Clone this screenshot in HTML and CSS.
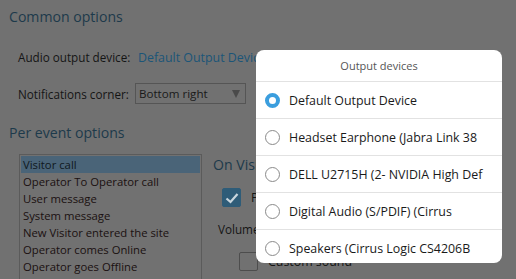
FILE: index.html
```html
<!DOCTYPE html>
<html>
<head>
<meta charset="utf-8">
<link rel="stylesheet" href="styles.css">
</head>
<body>
<div class="page">
  <div class="section-title">Common options</div>
  <div class="row row-audio">
    <span class="label">Audio output device:</span>
    <span class="link">Default Output Device</span>
  </div>
  <div class="row row-corner">
    <span class="label">Notifications corner:</span>
    <div class="select"><span>Bottom right</span><span class="arrow"></span></div>
  </div>
  <div class="section-title title-per">Per event options</div>
  <div class="events">
    <div class="listbox">
      <div class="item selected">Visitor call</div>
      <div class="item">Operator To Operator call</div>
      <div class="item">User message</div>
      <div class="item">System message</div>
      <div class="item">New Visitor entered the site</div>
      <div class="item">Operator comes Online</div>
      <div class="item">Operator goes Offline</div>
    </div>
    <div class="panel">
      <div class="panel-title">On Visitor call</div>
      <div class="check-row">
        <span class="checkbox checked"><svg width="14" height="12" viewBox="0 0 14 12"><path d="M1.5 6.5 L5.5 10 L12.5 2" fill="none" stroke="#c9d6de" stroke-width="2.2"/></svg></span>
        <span class="check-label">Play sound</span>
      </div>
      <div class="volume">Volume</div>
      <div class="check-row custom">
        <span class="checkbox"></span>
        <span class="check-label">Custom sound</span>
      </div>
    </div>
  </div>
</div>

<div class="popup">
  <div class="popup-header">Output devices</div>
  <div class="option"><span class="radio on"></span><span class="opt-text">Default Output Device</span></div>
  <div class="option"><span class="radio"></span><span class="opt-text">Headset Earphone (Jabra Link 38</span></div>
  <div class="option"><span class="radio"></span><span class="opt-text">DELL U2715H (2- NVIDIA High Def</span></div>
  <div class="option"><span class="radio"></span><span class="opt-text">Digital Audio (S/PDIF) (Cirrus</span></div>
  <div class="option last"><span class="radio"></span><span class="opt-text">Speakers (Cirrus Logic CS4206B</span></div>
</div>
</body>
</html>
```
FILE: styles.css
```css
html, body {
  margin: 0;
  padding: 0;
}
body {
  width: 516px;
  height: 279px;
  overflow: hidden;
  background: #717171;
  font-family: "Open Sans", "Noto Sans", sans-serif;
  font-size: 11.7px;
  color: #151515;
  position: relative;
}
.page {
  padding: 5px 0 0 9px;
  height: 274px;
  overflow: hidden;
}
.section-title {
  font-size: 14.1px;
  line-height: 24px;
  color: #1d3a4b;
}
.row {
  display: flex;
  align-items: center;
  padding-left: 9px;
  white-space: nowrap;
}
.label {
  flex: none;
}
.row-audio {
  margin-top: 16px;
  height: 24px;
}
.row-audio .label {
  width: 120px;
}
.link {
  color: #1b5578;
  font-size: 12.4px;
}
.row-corner {
  margin-top: 14px;
  height: 21px;
}
.row-corner .label {
  width: 117px;
}
.select {
  flex: none;
  width: 101px;
  height: 19px;
  border: 1px solid #555;
  display: flex;
  align-items: center;
  justify-content: space-between;
  padding: 0 5px 0 3px;
  font-size: 11.6px;
  color: #1a1a1a;
}
.arrow {
  width: 0;
  height: 0;
  border-left: 4px solid transparent;
  border-right: 4px solid transparent;
  border-top: 8px solid #4a4a4a;
}
.title-per {
  margin-top: 17px;
}
.events {
  display: flex;
  margin-top: 9px;
}
.listbox {
  flex: none;
  margin-left: 10px;
  width: 183px;
  height: 126px;
  border: 1px solid #5b5b5b;
  border-bottom: none;
  padding: 1px;
  box-sizing: border-box;
}
.item {
  height: 17px;
  line-height: 17px;
  padding-left: 2px;
  font-size: 11.3px;
  color: #1a1010;
  white-space: nowrap;
}
.item.selected {
  background: #4a6478;
  color: #101820;
}
.panel {
  margin-left: 11px;
  white-space: nowrap;
}
.panel-title {
  font-size: 14.1px;
  color: #1d3a4b;
  line-height: 20px;
  margin-top: 1px;
}
.check-row {
  display: flex;
  align-items: center;
  gap: 10px;
  margin-top: 13px;
  margin-left: 9px;
}
.checkbox {
  flex: none;
  width: 19px;
  height: 19px;
  box-sizing: border-box;
  border: 1px solid #4d4d4d;
  border-radius: 2px;
  display: flex;
  align-items: center;
  justify-content: center;
}
.checkbox.checked {
  background: #2e5c78;
  border-color: #2e5c78;
}
.check-label {
  font-size: 12.4px;
}
.volume {
  margin-top: 14px;
  margin-left: 5px;
  font-size: 11.7px;
}
.check-row.custom {
  margin-top: 15px;
  margin-left: 26px;
}
.check-row.custom .check-label {
  padding-top: 0;
}
.popup {
  position: absolute;
  left: 256px;
  top: 50px;
  width: 246px;
  height: 213px;
  background: #fff;
  border-radius: 8px;
  overflow: hidden;
}
.popup-header {
  height: 31px;
  line-height: 31px;
  text-align: center;
  font-size: 11px;
  color: #555;
  border-bottom: 1px solid #e2e2e2;
}
.option {
  height: 36px;
  border-bottom: 1px solid #e2e2e2;
  display: flex;
  align-items: center;
  padding-left: 9px;
  white-space: nowrap;
}
.option.last {
  border-bottom: none;
}
.radio {
  width: 15px;
  height: 15px;
  box-sizing: border-box;
  border: 1px solid #8a8a8a;
  border-radius: 50%;
  margin-right: 9px;
  flex: none;
}
.radio.on {
  border: 4px solid #3b9ede;
}
.opt-text {
  font-size: 12.4px;
  color: #1a1a1a;
}
```
